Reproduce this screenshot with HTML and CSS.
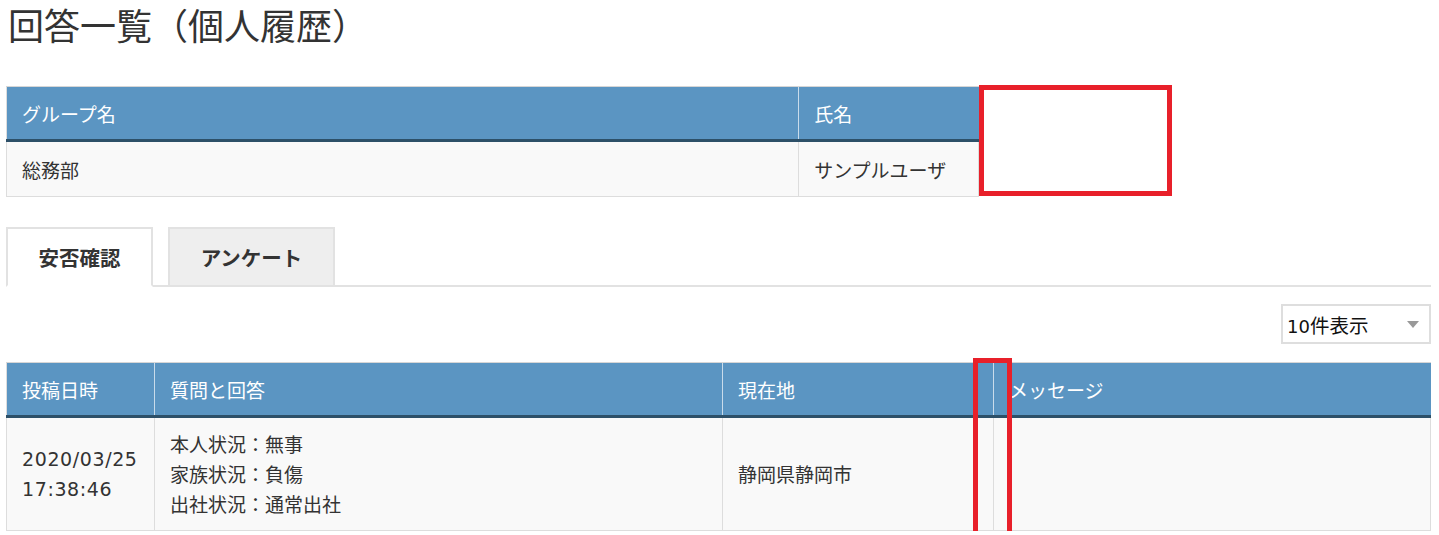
FILE: index.html
```html
<!DOCTYPE html>
<html lang="ja">
<head>
<meta charset="utf-8">
<title>回答一覧（個人履歴）</title>
<link rel="stylesheet" href="styles.css">
</head>
<body>
<div class="page">
  <h1 class="title">回答一覧（個人履歴）</h1>

  <div class="profile">
    <table class="tbl profile-tbl">
      <thead>
        <tr><th class="c-group">グループ名</th><th class="c-name">氏名</th></tr>
      </thead>
      <tbody>
        <tr><td>総務部</td><td>サンプルユーザ</td></tr>
      </tbody>
    </table>
    <div class="mark-box"></div>
  </div>

  <div class="tabs">
    <div class="tab active">安否確認</div>
    <div class="tab">アンケート</div>
  </div>

  <div class="toolbar">
    <div class="select">
      <span><span class="num">10</span>件表示</span>
      <span class="caret"></span>
    </div>
  </div>

  <div class="history">
    <table class="tbl history-tbl">
      <thead>
        <tr>
          <th class="h-date">投稿日時</th>
          <th class="h-qa">質問と回答</th>
          <th class="h-loc">現在地</th>
          <th class="h-msg">メッセージ</th>
        </tr>
      </thead>
      <tbody>
        <tr>
          <td class="date">2020/03/25<br>17:38:46</td>
          <td>本人状況：無事<br>家族状況：負傷<br>出社状況：通常出社</td>
          <td>静岡県静岡市</td>
          <td></td>
        </tr>
      </tbody>
    </table>
    <div class="mark-col"></div>
  </div>
</div>
</body>
</html>
```

FILE: styles.css
```css
* { box-sizing: border-box; }
html, body { margin: 0; padding: 0; background: #fff; }
body {
  font-family: "Noto Sans CJK JP", "Noto Sans", sans-serif;
  color: #333;
  overflow: hidden;
}
.page {
  padding: 0 8px 0 6px;
}
.title {
  margin: 0 0 38px 2px;
  font-size: 36px;
  line-height: 48px;
  font-weight: 400;
  color: #333;
}
.profile {
  display: flex;
  align-items: flex-start;
}
.tbl {
  border-collapse: collapse;
  font-size: 19px;
}
.tbl th {
  background: #5b95c2;
  color: #fff;
  font-weight: 400;
  text-align: left;
  padding: 0 15px;
  height: 54px;
  border-top: 1px solid #d6d6d6;
  border-left: 1px solid #c9dceb;
  border-bottom: 3px solid #2d5068;
}
.tbl th:first-child { border-left: 1px solid #ddd; }
.tbl td {
  background: #f9f9f9;
  padding: 0 15px;
  border: 1px solid #ddd;
  vertical-align: middle;
}
.profile-tbl { width: 973px; }
.profile-tbl td { height: 56px; }
.c-group { width: 793px; }
.c-name { width: 180px; }

.mark-box {
  width: 193px;
  height: 111px;
  margin-top: -1px;
  border: 5px solid #e8202a;
  background: #fff;
}

.tabs {
  margin-top: 30px;
  display: flex;
  gap: 15px;
  border-bottom: 2px solid #e2e2e2;
}
.tab {
  height: 60px;
  margin-bottom: -2px;
  border: 2px solid #e2e2e2;
  font-size: 20.5px;
  font-weight: 700;
  line-height: 56px;
  text-align: center;
  background: #eee;
  color: #333;
}
.tab.active {
  background: #fff;
  width: 147px;
  border-bottom: 2px solid #fff;
}
.tab:not(.active) {
  width: 167px;
}

.toolbar {
  display: flex;
  justify-content: flex-end;
  margin-top: 17px;
}
.select {
  width: 150px;
  height: 40px;
  border: 2px solid #dedede;
  display: flex;
  align-items: center;
  justify-content: space-between;
  padding: 0 10px 0 4px;
  font-size: 19.5px;
  color: #111;
}
.num {
  font-family: "DejaVu Sans", sans-serif;
  font-size: 18px;
}
.caret {
  width: 0;
  height: 0;
  border-left: 6px solid transparent;
  border-right: 6px solid transparent;
  border-top: 7px solid #999;
}

.history {
  position: relative;
  margin-top: 18px;
}
.history-tbl { width: 100%; }
.history-tbl td {
  height: 114px;
  line-height: 30px;
}
.history-tbl td.date {
  font-family: "DejaVu Sans", sans-serif;
  font-size: 19px;
  letter-spacing: 0.6px;
}
.h-date { width: 148px; }
.h-qa { width: 568px; }
.h-loc { width: 271px; }
.h-msg { width: auto; }

.mark-col {
  position: absolute;
  left: 967px;
  top: -4px;
  width: 39px;
  height: 200px;
  border: 5px solid #e8202a;
}
```
